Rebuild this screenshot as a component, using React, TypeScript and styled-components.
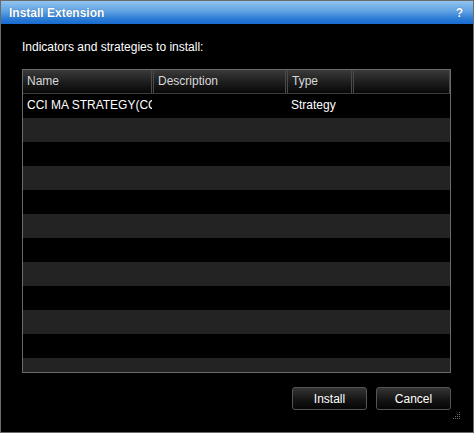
import React from "react";
import styled, { createGlobalStyle } from "styled-components";

const Global = createGlobalStyle`
  html, body { margin: 0; padding: 0; background: #000; }
  body { font-family: "Liberation Sans", Arial, sans-serif; font-size: 12px; }
`;

const Dialog = styled.div`
  width: 474px;
  height: 433px;
  box-sizing: border-box;
  border: 1px solid #6a6a6a;
  background: #000;
  display: flex;
  flex-direction: column;
  position: relative;
  color: #fff;
`;

const TitleBar = styled.div`
  height: 23px;
  display: flex;
  align-items: center;
  justify-content: space-between;
  padding: 0 10px 0 8px;
  background: linear-gradient(#92c3ee 0%, #5fa2e2 45%, #2f7ed6 75%, #176bd0 100%);
  font-weight: bold;
  font-size: 12px;
  color: #fff;
  text-shadow: 0 0 1px rgba(0, 40, 100, 0.6);
`;

const Help = styled.span`
  font-size: 12px;
  font-weight: bold;
`;

const Content = styled.div`
  flex: 1;
  display: flex;
  flex-direction: column;
  padding: 16px 22px 0 21px;
`;

const Label = styled.div`
  line-height: 14px;
  color: #fff;
  margin-bottom: 15px;
`;

const Table = styled.div`
  width: 429px;
  height: 304px;
  box-sizing: border-box;
  border: 1px solid #6a6a6a;
  display: flex;
  flex-direction: column;
  overflow: hidden;
`;

const HeaderRow = styled.div`
  display: flex;
  height: 23px;
  border-bottom: 1px solid #3c3c3c;
  background: linear-gradient(#3b3b3b, #1c1c1c 55%, #080808);
  gap: 1px;
`;

const HeaderCell = styled.div<{ $w?: number; $first?: boolean }>`
  ${(p) => (p.$w ? `width: ${p.$w}px;` : "flex: 1;")}
  box-sizing: border-box;
  border-left: ${(p) => (p.$first ? "none" : "1px solid #4a4a4a")};
  border-right: 1px solid #4a4a4a;
  padding-left: 4px;
  line-height: 23px;
  color: #d8d8d8;
  white-space: nowrap;
  overflow: hidden;
`;

const Row = styled.div<{ $alt: boolean }>`
  display: flex;
  height: 24px;
  flex-shrink: 0;
  background: ${(p) => (p.$alt ? "#232323" : "#000")};
  gap: 1px;
`;

const Cell = styled.div<{ $w?: number }>`
  ${(p) => (p.$w ? `width: ${p.$w}px;` : "flex: 1;")}
  box-sizing: border-box;
  padding: 0 3px 0 4px;
  line-height: 23px;
  color: #fff;
  white-space: nowrap;
  overflow: hidden;
  text-overflow: clip;
`;

const Footer = styled.div`
  display: flex;
  justify-content: flex-end;
  gap: 9px;
  margin-top: 14px;
`;

const Button = styled.button`
  width: 75px;
  height: 23px;
  box-sizing: border-box;
  border: 1px solid #555;
  border-radius: 3px;
  background: linear-gradient(#353535, #151515 55%, #050505);
  color: #fff;
  font-family: "Liberation Sans", Arial, sans-serif;
  font-size: 12px;
  padding: 0;
  cursor: pointer;
`;

const Grip = styled.svg`
  position: absolute;
  right: 12px;
  bottom: 12px;
`;

const cols = [129, 132, 64];

export default function App() {
  const rows = Array.from({ length: 12 }, (_, i) => i);
  return (
    <>
      <Global />
      <Dialog>
        <TitleBar>
          <span>Install Extension</span>
          <Help>?</Help>
        </TitleBar>
        <Content>
          <Label>Indicators and strategies to install:</Label>
          <Table>
            <HeaderRow>
              <HeaderCell $w={cols[0]} $first>Name</HeaderCell>
              <HeaderCell $w={cols[1] + 1}>Description</HeaderCell>
              <HeaderCell $w={cols[2] + 1}>Type</HeaderCell>
              <HeaderCell />
            </HeaderRow>
            {rows.map((i) => (
              <Row key={i} $alt={i % 2 === 1}>
                <Cell $w={cols[0]}>{i === 0 ? "CCI MA STRATEGY(CCI)" : ""}</Cell>
                <Cell $w={cols[1] + 1}></Cell>
                <Cell $w={cols[2] + 1}>{i === 0 ? "Strategy" : ""}</Cell>
                <Cell />
              </Row>
            ))}
          </Table>
          <Footer>
            <Button>Install</Button>
            <Button>Cancel</Button>
          </Footer>
        </Content>
        <Grip width="8" height="8" viewBox="0 0 8 8">
          {[
            [6, 0], [4, 2], [6, 2], [2, 4], [4, 4], [6, 4], [0, 6], [2, 6], [4, 6], [6, 6],
          ].map(([x, y], k) => (
            <rect key={k} x={x} y={y} width="1" height="1" fill="#666" />
          ))}
        </Grip>
      </Dialog>
    </>
  );
}
